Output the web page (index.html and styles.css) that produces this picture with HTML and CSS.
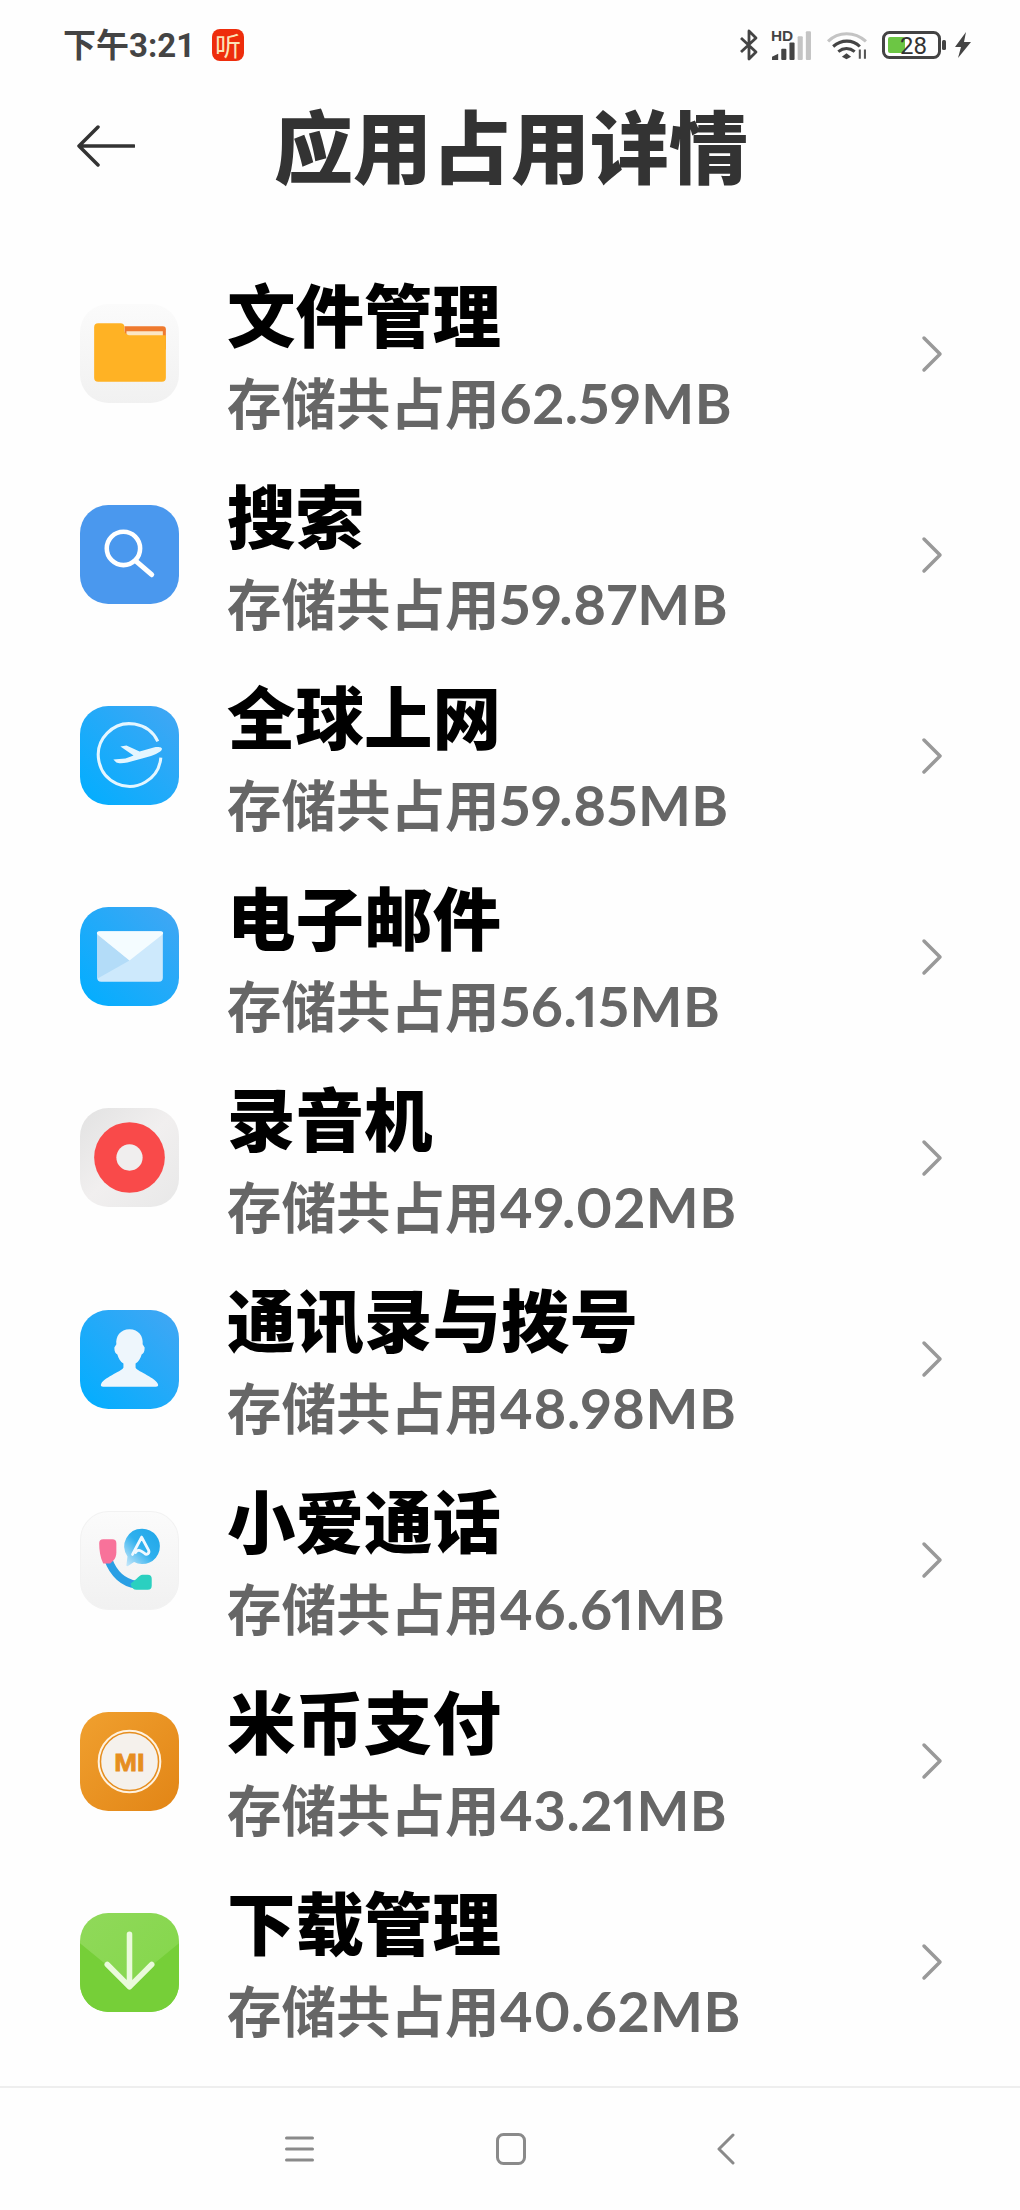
FILE: index.html
```html
<!DOCTYPE html>
<html lang="zh-CN">
<head>
  <meta charset="UTF-8">
  <meta name="viewport" content="width=device-width, initial-scale=1.0">
  <title>应用占用详情</title>
  <link rel="stylesheet" href="styles.css">
</head>
<body>

<div class="statusbar">
  <span class="time">下午3:21</span>
  <span class="ting">听</span>
  <div class="status-right">
    <svg class="st-bt" viewBox="0 0 20 32"><path d="M2 9l15 14-7 7V2l7 7L2 23" fill="none" stroke="#444" stroke-width="2.8" stroke-linejoin="round"/></svg>
    <svg class="st-sig" viewBox="0 0 40 34">
      <text x="0" y="15" class="hd">HD</text>
      <path d="M1 33v-3l6-3v6z" fill="#444"/>
      <rect x="10" y="22" width="5" height="11" rx="1" fill="#444"/>
      <rect x="18" y="16" width="5" height="17" rx="1" fill="#444"/>
      <rect x="26" y="10" width="5" height="23" rx="1" fill="#c4c4c4"/>
      <rect x="34" y="5" width="5" height="28" rx="1" fill="#c4c4c4"/>
    </svg>
    <svg class="st-wifi" viewBox="0 0 41 28">
      <path d="M2 10C12 0 28 0 39 10" fill="none" stroke="#c4c4c4" stroke-width="3"/>
      <path d="M7 15c8-7 19-7 26 0M12 20c5-4 11-4 16 0" fill="none" stroke="#444" stroke-width="3"/>
      <path d="M15.500 25l4.500-3.500 4.500 3.500-4.500 2.500z" fill="#444"/>
      <path d="M33 18v9M38 18v9" stroke="#555" stroke-width="2"/>
    </svg>
    <svg class="st-batt" viewBox="0 0 65 28">
      <rect x="1.500" y="1.500" width="56" height="25" rx="6" fill="#fff" stroke="#444" stroke-width="3"/>
      <rect x="6" y="6" width="17" height="16" rx="2" fill="#6cc644"/>
      <rect x="60" y="9" width="4" height="10" rx="1.500" fill="#444"/>
      <text x="18" y="22.500" class="batt-num">28</text>
    </svg>
    <svg class="st-bolt" viewBox="0 0 18 26"><path d="M12 0L1 15h6l-3 11L17 10h-7z" fill="#444"/></svg>
  </div>
</div>

<div class="topbar">
  <svg class="back" viewBox="0 0 58 42"><path d="M21 2L2 21l19 19M2 21h55" fill="none" stroke="#333" stroke-width="3.500" stroke-linecap="round" stroke-linejoin="round"/></svg>
  <h1>应用占用详情</h1>
</div>

<ul class="applist">
  <li class="row">
    <svg class="appicon" viewBox="0 0 98 98">
      <defs><linearGradient id="gWhite" x1="0" y1="0" x2="0" y2="1"><stop offset="0" stop-color="#fbfbfb"/><stop offset="1" stop-color="#f1f1f1"/></linearGradient></defs>
      <rect width="98" height="98" rx="28" fill="url(#gWhite)"/>
      <path d="M44 22h38a3 3 0 0 1 3 3v20H44z" fill="#ef7a2e"/>
      <path d="M46 27h36v10H46z" fill="#fbe6c4"/>
      <path d="M18 19h22a4 4 0 0 1 4 4 6 6 0 0 0 6 8h35v42a4 4 0 0 1-4 4H18a4 4 0 0 1-4-4V23a4 4 0 0 1 4-4z" fill="#ffb224"/>
    </svg>
    <div class="rowtext"><div class="name">文件管理</div><div class="size">存储共占用<span class="num">62.59MB</span></div></div>
    <svg class="chev" viewBox="0 0 22 38"><path d="M3 3l16 16L3 35" fill="none" stroke="#999" stroke-width="3.500" stroke-linecap="round" stroke-linejoin="round"/></svg>
  </li>
  <li class="row">
    <svg class="appicon" viewBox="0 0 98 98">
      <rect width="98" height="98" rx="28" fill="#4a98ee"/>
      <circle cx="43" cy="43" r="16.500" fill="none" stroke="#fff" stroke-width="4.500"/>
      <path d="M56 56l15 13" stroke="#fff" stroke-width="5" stroke-linecap="round"/>
    </svg>
    <div class="rowtext"><div class="name">搜索</div><div class="size">存储共占用<span class="num">59.87MB</span></div></div>
    <svg class="chev" viewBox="0 0 22 38"><path d="M3 3l16 16L3 35" fill="none" stroke="#999" stroke-width="3.500" stroke-linecap="round" stroke-linejoin="round"/></svg>
  </li>
  <li class="row">
    <svg class="appicon" viewBox="0 0 98 98">
      <defs><linearGradient id="gBlue" x1="0" y1="1" x2="1" y2="0"><stop offset="0" stop-color="#00aeff"/><stop offset="1" stop-color="#43a6f3"/></linearGradient></defs>
      <rect width="98" height="98" rx="28" fill="url(#gBlue)"/>
      <path d="M77 35A31 31 0 1 0 80 51" fill="none" stroke="#e4f6ff" stroke-width="3"/>
      <path d="M40 40l6-1 13 6 14-4c5-1 9 0 8 2-1 3-9 6-16 8l-18 5c-5 1-9 1-11 0l-3-3 12-1 8-3z" fill="#e4f6ff"/>
    </svg>
    <div class="rowtext"><div class="name">全球上网</div><div class="size">存储共占用<span class="num">59.85MB</span></div></div>
    <svg class="chev" viewBox="0 0 22 38"><path d="M3 3l16 16L3 35" fill="none" stroke="#999" stroke-width="3.500" stroke-linecap="round" stroke-linejoin="round"/></svg>
  </li>
  <li class="row">
    <svg class="appicon" viewBox="0 0 98 98">
      <rect width="98" height="98" rx="28" fill="url(#gBlue)"/>
      <rect x="17" y="24" width="65" height="50" rx="4" fill="#cde9fc"/>
      <path d="M17 27v44l32-18z" fill="#b3dcf8"/>
      <path d="M19 24h61a2 2 0 0 1 2 3L49 53 17 27a2 2 0 0 1 2-3z" fill="#f4fcff"/>
    </svg>
    <div class="rowtext"><div class="name">电子邮件</div><div class="size">存储共占用<span class="num">56.15MB</span></div></div>
    <svg class="chev" viewBox="0 0 22 38"><path d="M3 3l16 16L3 35" fill="none" stroke="#999" stroke-width="3.500" stroke-linecap="round" stroke-linejoin="round"/></svg>
  </li>
  <li class="row">
    <svg class="appicon" viewBox="0 0 98 98">
      <defs><linearGradient id="gGrey" x1="0" y1="0" x2="1" y2="1"><stop offset="0" stop-color="#e2e2e2"/><stop offset="0.500" stop-color="#f1efef"/><stop offset="1" stop-color="#e8e8e8"/></linearGradient></defs>
      <rect width="98" height="98" rx="28" fill="url(#gGrey)"/>
      <circle cx="49" cy="49" r="35" fill="#f94a4a"/>
      <circle cx="49" cy="49" r="13" fill="#f0eeee"/>
    </svg>
    <div class="rowtext"><div class="name">录音机</div><div class="size">存储共占用<span class="num">49.02MB</span></div></div>
    <svg class="chev" viewBox="0 0 22 38"><path d="M3 3l16 16L3 35" fill="none" stroke="#999" stroke-width="3.500" stroke-linecap="round" stroke-linejoin="round"/></svg>
  </li>
  <li class="row">
    <svg class="appicon" viewBox="0 0 98 98">
      <rect width="98" height="98" rx="28" fill="url(#gBlue)"/>
      <path d="M49 19c9 0 14 7 13 15l2 3c0 4-1 6-3 7-1 4-3 7-6 9v4c0 3 18 9 22 16 1 2 0 3-2 3H23c-2 0-3-1-2-3 4-7 22-13 22-16v-4c-3-2-5-5-6-9-2-1-3-3-3-7l2-3c-1-8 4-15 13-15z" fill="#eef6fc"/>
    </svg>
    <div class="rowtext"><div class="name">通讯录与拨号</div><div class="size">存储共占用<span class="num">48.98MB</span></div></div>
    <svg class="chev" viewBox="0 0 22 38"><path d="M3 3l16 16L3 35" fill="none" stroke="#999" stroke-width="3.500" stroke-linecap="round" stroke-linejoin="round"/></svg>
  </li>
  <li class="row">
    <svg class="appicon" viewBox="0 0 98 98">
      <defs><linearGradient id="gBubble" x1="0" y1="1" x2="1" y2="0"><stop offset="0" stop-color="#d3ecfb"/><stop offset="0.500" stop-color="#2fb0ee"/><stop offset="1" stop-color="#1fa6e8"/></linearGradient></defs>
      <rect x="0.500" y="0.500" width="97" height="97" rx="28" fill="url(#gWhite)" stroke="#f2f2f2"/>
      <path d="M61.500 17.500a17.500 17.500 0 1 1-8 33l-6 4c-1 .5-2 0-1.500-1.500l1-8a17.500 17.500 0 0 1 14.500-27.500z" fill="url(#gBubble)"/>
      <path d="M61 26l-9 17M61 26l7 13c1 3-2 5-4 3l-3-2c-2-2-5-1-6 1" fill="none" stroke="#f0f9ff" stroke-width="2.800" stroke-linejoin="round" stroke-linecap="round"/>
      <path d="M28 48c5 14 15 23 28 25" fill="none" stroke="#2a9fe4" stroke-width="8"/>
      <path d="M19 32a4 4 0 0 1 4-4h9a4 4 0 0 1 4 4v9c0 3-1 6-3 8l-3 3h-7c-3-6-4-13-4-20z" fill="#f8729a"/>
      <path d="M50 72l6-5c2-2 4-4 6-4h5a4 4 0 0 1 4 4v7a4 4 0 0 1-4 4H56c-3 0-5-2-6-6z" fill="#2bd0c0"/>
    </svg>
    <div class="rowtext"><div class="name">小爱通话</div><div class="size">存储共占用<span class="num">46.61MB</span></div></div>
    <svg class="chev" viewBox="0 0 22 38"><path d="M3 3l16 16L3 35" fill="none" stroke="#999" stroke-width="3.500" stroke-linecap="round" stroke-linejoin="round"/></svg>
  </li>
  <li class="row">
    <svg class="appicon" viewBox="0 0 98 98">
      <defs><linearGradient id="gOrange" x1="0" y1="0" x2="1" y2="1"><stop offset="0" stop-color="#f0a02f"/><stop offset="1" stop-color="#e28516"/></linearGradient></defs>
      <rect width="98" height="98" rx="28" fill="url(#gOrange)"/>
      <circle cx="49" cy="49" r="29" fill="#f5f1ec" stroke="#e68e1f" stroke-width="2"/>
      <circle cx="49" cy="49" r="30.500" fill="none" stroke="#fff2df" stroke-width="2"/>
      <text x="34" y="58" class="mi-text" textLength="30" lengthAdjust="spacingAndGlyphs">MI</text>
    </svg>
    <div class="rowtext"><div class="name">米币支付</div><div class="size">存储共占用<span class="num">43.21MB</span></div></div>
    <svg class="chev" viewBox="0 0 22 38"><path d="M3 3l16 16L3 35" fill="none" stroke="#999" stroke-width="3.500" stroke-linecap="round" stroke-linejoin="round"/></svg>
  </li>
  <li class="row">
    <svg class="appicon" viewBox="0 0 98 98">
      <defs><linearGradient id="gGreen" x1="0" y1="0" x2="1" y2="1"><stop offset="0" stop-color="#90d95a"/><stop offset="1" stop-color="#82d648"/></linearGradient></defs>
      <rect width="98" height="98" rx="28" fill="url(#gGreen)"/>
      <path d="M0 30l49 40 49-40v40a28 28 0 0 1-28 28H28A28 28 0 0 1 0 70z" fill="#76cf38"/>
      <path d="M49 21v52M27 51l22 22 22-22" fill="none" stroke="#eafadb" stroke-width="5.500" stroke-linecap="round" stroke-linejoin="round"/>
    </svg>
    <div class="rowtext"><div class="name">下载管理</div><div class="size">存储共占用<span class="num">40.62MB</span></div></div>
    <svg class="chev" viewBox="0 0 22 38"><path d="M3 3l16 16L3 35" fill="none" stroke="#999" stroke-width="3.500" stroke-linecap="round" stroke-linejoin="round"/></svg>
  </li>
</ul>

<div class="navbar">
  <svg class="nav-menu" viewBox="0 0 29 26"><path d="M1.500 2h26M1.500 13h26M1.500 24h26" stroke="#8a8a8a" stroke-width="3" stroke-linecap="round"/></svg>
  <svg class="nav-home" viewBox="0 0 30 32"><rect x="1.500" y="1.500" width="27" height="29" rx="6" fill="none" stroke="#8a8a8a" stroke-width="3"/></svg>
  <svg class="nav-back" viewBox="0 0 18 32"><path d="M16 2L2 16l14 14" fill="none" stroke="#8a8a8a" stroke-width="3" stroke-linecap="round" stroke-linejoin="round"/></svg>
</div>

</body>
</html>
```

FILE: styles.css
```css
html, body { margin: 0; padding: 0; }
body { width: 1020px; height: 2210px; background: #fefefe; display: flex; flex-direction: column; font-family: Lato, "Noto Sans CJK SC", sans-serif; overflow: hidden; }

.statusbar { height: 90px; display: flex; align-items: center; padding: 0 48px 0 63px; }
.time { font-family: Roboto, "Noto Sans CJK SC", sans-serif; font-size: 33px; font-weight: 700; color: #444; margin: 0 17px 5px 0; }
.ting { width: 32px; height: 32px; border-radius: 8px; background: #ee2d0c; color: #fbe3b8; font-family: "Noto Sans CJK SC", sans-serif; font-size: 26px; line-height: 31px; text-align: center; }
.status-right { margin-left: auto; display: flex; align-items: center; }
.st-bt { width: 20px; height: 32px; margin-right: 12px; }
.st-sig { width: 41px; height: 35px; margin: 0 14px 3px 0; }
.hd { font-family: "Liberation Sans", sans-serif; font-size: 15px; font-weight: 700; fill: #444; }
.st-wifi { width: 42px; height: 29px; margin-right: 14px; }
.st-batt { width: 65px; height: 28px; margin-right: 7px; }
.batt-num { font-family: Roboto, sans-serif; font-size: 24px; fill: #333; }
.st-bolt { width: 18px; height: 26px; }

.topbar { height: 116px; display: flex; align-items: center; padding-left: 77px; }
.back { width: 58px; height: 42px; margin-bottom: 5px; }
h1 { margin: 0 0 8px 139px; font-family: "Noto Sans CJK SC", sans-serif; font-size: 79px; font-weight: 900; color: #333; line-height: 100px; }

.applist { list-style: none; margin: 0; padding: 47px 0 0; flex: 1; }
.row { height: 201.100px; display: flex; align-items: center; padding: 0 77px 0 80px; box-sizing: border-box; }
.appicon { width: 99px; height: 99px; flex-shrink: 0; }
.rowtext { margin-left: 48px; padding-top: 12px; }
.name { font-family: "Noto Sans CJK SC", sans-serif; font-size: 68.500px; font-weight: 900; color: #000; line-height: 78px; padding-bottom: 8px; }
.size { font-size: 54.500px; font-weight: 700; color: #666; line-height: 86px; white-space: nowrap; }
.num { font-size: 56px; font-variant-numeric: proportional-nums; letter-spacing: 0.500px; }
.chev { width: 22px; height: 38px; margin-left: auto; }
.mi-text { font-family: "Liberation Sans", sans-serif; font-size: 24px; font-weight: 700; fill: #e68e1f; stroke: #e68e1f; stroke-width: 0.800px; }

.navbar { height: 122px; border-top: 2px solid #eeeeee; display: flex; align-items: center; padding-left: 285px; }
.nav-menu { width: 29px; height: 26px; }
.nav-home { width: 30px; height: 32px; margin-left: 182px; }
.nav-back { width: 18px; height: 32px; margin-left: 191px; }
```
